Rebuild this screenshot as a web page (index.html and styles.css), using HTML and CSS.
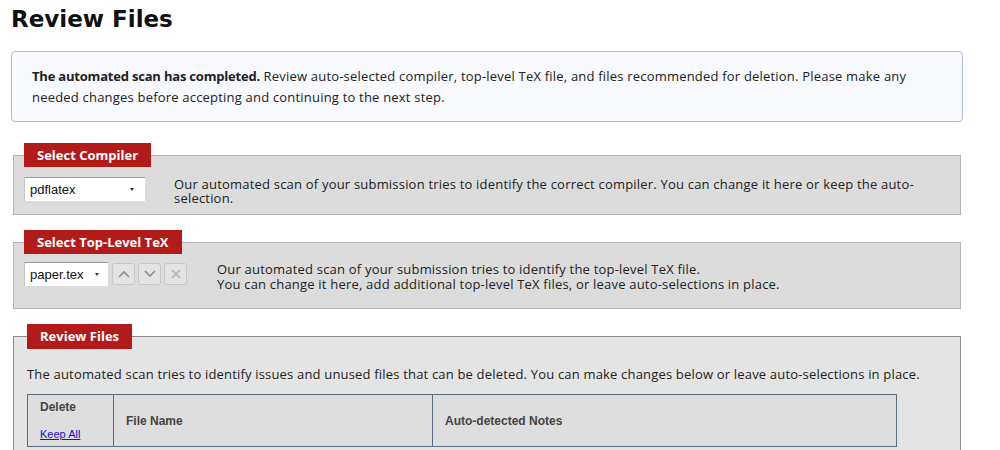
FILE: index.html
```html
<!DOCTYPE html>
<html lang="en">
<head>
<meta charset="utf-8">
<title>Review Files</title>
<link rel="stylesheet" href="styles.css">
</head>
<body>
<div class="page">
  <h1 class="title">Review Files</h1>

  <div class="notice">
    <strong>The automated scan has completed.</strong> Review auto-selected compiler, top-level TeX file, and files recommended for deletion. Please make any needed changes before accepting and continuing to the next step.
  </div>

  <fieldset class="panel panel-compiler">
    <legend class="panel-label">Select Compiler</legend>
    <div class="panel-row">
      <span class="select-wrap select-compiler">
        <select class="select"><option>pdflatex</option><option>latex</option></select>
      </span>
      <p class="panel-text panel-text-tight">Our automated scan of your submission tries to identify the correct compiler. You can change it here or keep the auto-selection.</p>
    </div>
  </fieldset>

  <fieldset class="panel panel-toplevel">
    <legend class="panel-label">Select Top-Level TeX</legend>
    <div class="panel-row">
      <span class="select-wrap select-tex">
        <select class="select"><option>paper.tex</option></select>
      </span>
      <div class="btn-group">
        <button class="icon-btn" type="button" aria-label="Move up">
          <svg width="12" height="8" viewBox="0 0 12 8"><path d="M1 7 L6 2 L11 7" fill="none" stroke="#8c8c8c" stroke-width="1.6"/></svg>
        </button>
        <button class="icon-btn" type="button" aria-label="Move down">
          <svg width="12" height="8" viewBox="0 0 12 8"><path d="M1 1 L6 6 L11 1" fill="none" stroke="#8c8c8c" stroke-width="1.6"/></svg>
        </button>
        <button class="icon-btn icon-btn-disabled" type="button" aria-label="Remove">
          <svg width="10" height="10" viewBox="0 0 10 10"><path d="M1 1 L9 9 M9 1 L1 9" fill="none" stroke="#b2b2b2" stroke-width="1.6"/></svg>
        </button>
      </div>
      <p class="panel-text panel-text-wide">Our automated scan of your submission tries to identify the top-level TeX file.<br>You can change it here, add additional top-level TeX files, or leave auto-selections in place.</p>
    </div>
  </fieldset>

  <fieldset class="panel panel-review">
    <legend class="panel-label panel-label-review">Review Files</legend>
    <p class="review-intro">The automated scan tries to identify issues and unused files that can be deleted. You can make changes below or leave auto-selections in place.</p>
    <table class="files-table">
      <thead>
        <tr>
          <th class="col-delete">
            <span class="th-line">Delete</span>
            <a class="keep-all" href="#">Keep All</a>
          </th>
          <th class="col-name">File Name</th>
          <th class="col-notes">Auto-detected Notes</th>
        </tr>
      </thead>
    </table>
  </fieldset>
</div>
</body>
</html>
```

FILE: styles.css
```css
html, body {
  overflow: hidden;
}

body {
  margin: 0;
  background: #ffffff;
  color: #222222;
  font-family: "Open Sans", "Noto Sans", sans-serif;
  font-size: 13px;
}

.page {
  width: 952px;
  margin-left: 11px;
}

.title {
  margin: 0;
  padding-top: 6px;
  font-family: "DejaVu Sans", sans-serif;
  font-weight: bold;
  font-size: 23px;
  line-height: 26px;
  color: #111111;
}

.notice {
  margin-top: 19px;
  padding: 14px 20px 13px;
  border: 1px solid #aebcd4;
  border-radius: 4px;
  background: #f7f9fc;
  font-size: 13px;
  line-height: 21px;
  letter-spacing: 0.2px;
  color: #222222;
}

.notice strong {
  font-weight: 700;
  letter-spacing: -0.2px;
}

.panel {
  margin: 21px 2px 0;
  padding: 10px 10px 9px;
  border: 1px solid #b4b4b4;
  background: #dcdcdc;
  min-width: 0;
}

.panel-toplevel {
  margin-top: 15px;
  padding: 8px 10px 16px;
}

.panel-review {
  margin-top: 15px;
  padding: 17px 13px 20px;
  border-color: #8e8e8e;
  background: #e4e4e4;
}

.panel-label {
  padding: 0 13px;
  background: #b31b1b;
  color: #ffffff;
  font-weight: 700;
  font-size: 13px;
  line-height: 24px;
}

.panel-label-review {
  line-height: 25px;
}

.panel-row {
  display: flex;
  align-items: flex-start;
}

.select-wrap {
  position: relative;
  display: block;
  flex: none;
}

.select-wrap::after {
  content: "";
  position: absolute;
  top: 11px;
  right: 11px;
  border-left: 2.5px solid transparent;
  border-right: 2.5px solid transparent;
  border-top: 3px solid #333333;
  pointer-events: none;
}

.select-tex::after {
  right: 9px;
}

.select {
  appearance: none;
  -webkit-appearance: none;
  display: block;
  height: 24px;
  margin: 0;
  padding: 0 0 0 5px;
  border: none;
  border-top: 1px solid #9a9a9a;
  border-left: 1px solid #c4c4c4;
  border-radius: 0;
  background: #ffffff;
  font-family: "Liberation Sans", Arial, sans-serif;
  font-size: 13px;
  color: #111111;
}

.select-compiler .select {
  width: 121px;
}

.select-tex .select {
  width: 84px;
}

.btn-group {
  display: flex;
  gap: 3px;
  margin-left: 4px;
  margin-top: 1px;
}

.icon-btn {
  display: flex;
  align-items: center;
  justify-content: center;
  width: 23px;
  height: 22px;
  padding: 0;
  border: 1px solid #c6c6c6;
  border-radius: 3px;
  background: #e3e3e3;
}

.panel-text {
  margin: 0 0 0 29px;
  font-size: 13px;
  line-height: 15px;
  letter-spacing: 0.2px;
  color: #222222;
}

.panel-text-tight {
  line-height: 14px;
}

.panel-text-wide {
  margin-left: 30px;
}

.review-intro {
  margin: 0;
  font-size: 13px;
  line-height: 16px;
  letter-spacing: 0.18px;
  color: #222222;
}

.files-table {
  width: 870px;
  margin-top: 12px;
  table-layout: fixed;
  border-collapse: collapse;
  border: 1px solid #5e6d84;
  font-family: "Liberation Sans", Arial, sans-serif;
}

.files-table th {
  box-sizing: border-box;
  height: 52px;
  padding: 0 12px;
  border: 1px solid #5e6d84;
  background: #dedede;
  text-align: left;
  vertical-align: middle;
  font-size: 12px;
  font-weight: 700;
  color: #444444;
}

.col-delete {
  width: 86px;
}

.col-name {
  width: 319px;
}

.th-line {
  display: block;
  line-height: 14px;
}

.keep-all {
  display: block;
  margin-top: 13px;
  line-height: 14px;
  font-size: 11px;
  font-weight: 400;
  color: #1a0dcc;
  text-decoration: underline;
}
```
